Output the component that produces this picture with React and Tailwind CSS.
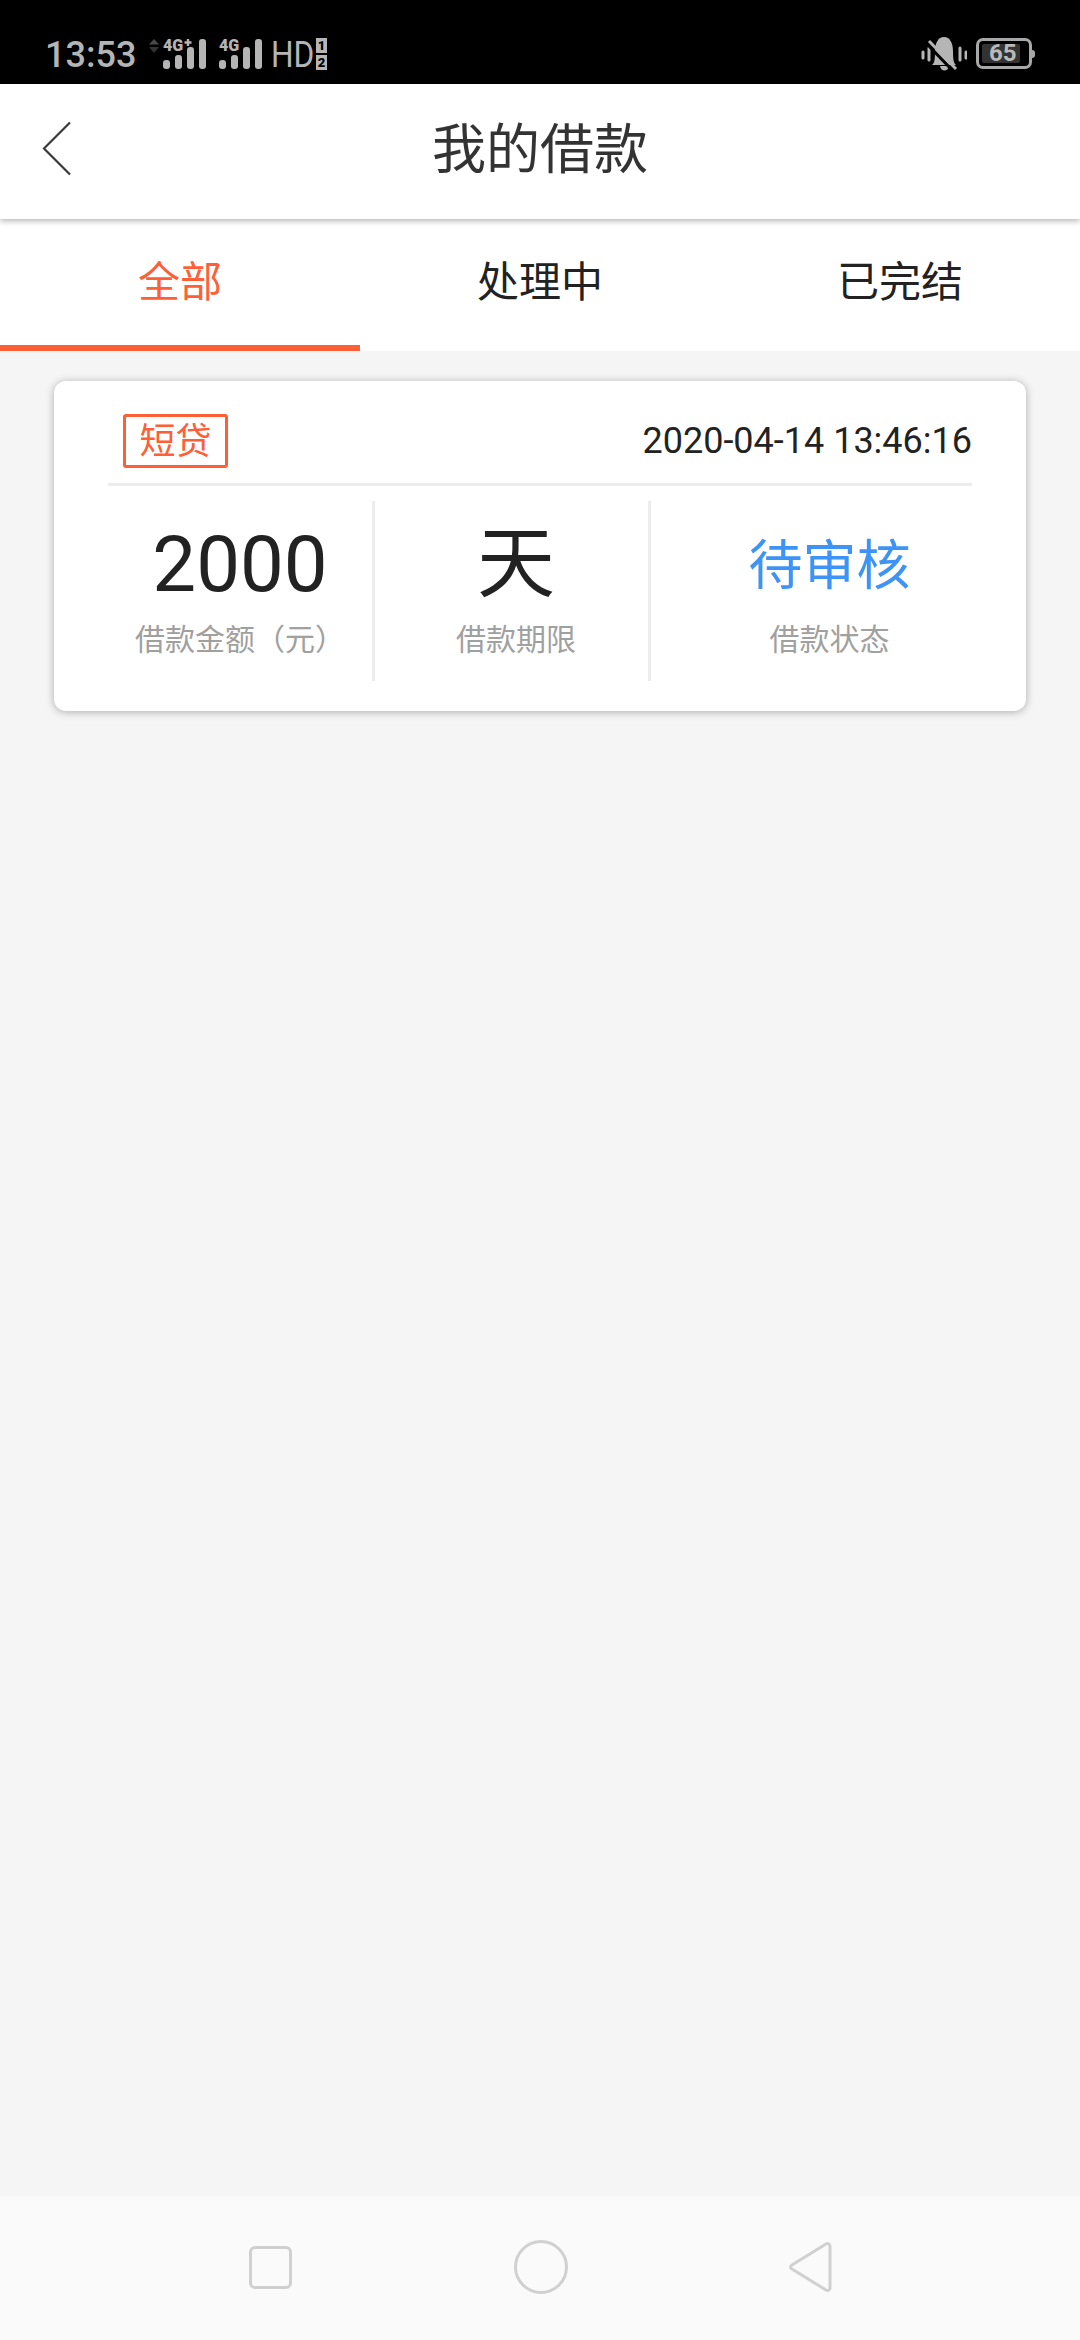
const FONT = 'font-[Roboto,"Noto_Sans_CJK_SC",sans-serif]'

function Signal({ label, plus }) {
  return (
    <svg width="44" height="36" viewBox="0 -4 44 36" className="block -mt-[4px]">
      <text x="0" y="12.500" fontFamily="Roboto, sans-serif" fontWeight="900" fontSize="16" fill="#b5b5b5">{label}</text>
      {plus && <path d="M25 1v7M21.500 4.500h7" stroke="#b5b5b5" strokeWidth="2.400" />}
      <rect x="0" y="22" width="7" height="9" rx="3" fill="#b5b5b5" />
      <rect x="12" y="17" width="7" height="14" rx="3" fill="#b5b5b5" />
      <rect x="24" y="9" width="7" height="22" rx="3" fill="#b5b5b5" />
      <rect x="36" y="1" width="7" height="30" rx="3" fill="#b5b5b5" />
    </svg>
  )
}

function SimBadge() {
  return (
    <div className="flex flex-col gap-[2px]">
      {['1', '2'].map(n => (
        <div key={n} className="w-[11px] h-[15px] bg-[#b5b5b5] text-black text-[13px] font-black leading-[15px] text-center">{n}</div>
      ))}
    </div>
  )
}

function MuteBell() {
  return (
    <svg width="46" height="34" viewBox="0 0 46 34" className="block">
      <path d="M2 15v6M8 11v12M39 11v12M45 15v6" stroke="#b5b5b5" strokeWidth="3" strokeLinecap="round" />
      <path d="M11 28c2-2 3-4 3-13C14 6 17 0 23 0s9 6 9 15c0 9 1 11 3 13z" fill="#b5b5b5" />
      <path d="M19 29h9c-1 6-8 6-9 0z" fill="#b5b5b5" />
      <path d="M6 7l26 27" stroke="#000" strokeWidth="3" />
      <path d="M8 4l27 28" stroke="#b5b5b5" strokeWidth="3" />
    </svg>
  )
}

function Battery() {
  return (
    <div className="flex items-center">
      <div className="w-[56px] h-[31px] border-[3px] border-[#a8a8a8] rounded-[7px] p-[3px] flex">
        <div className="w-[38px] h-full bg-[#333] rounded-[2px] relative">
          <span className="absolute left-[7px] top-0 text-[#b9b9b9] text-[24px] font-bold leading-[19px]">65</span>
        </div>
      </div>
      <div className="w-[3px] h-[8px] bg-[#a8a8a8] rounded-r-full" />
    </div>
  )
}

function StatusBar() {
  return (
    <div className="h-[84px] bg-black flex items-start justify-between pl-[45px] pr-[45px] pt-[38px] shrink-0">
      <div className="flex items-start">
        <span className="text-[36px] leading-[34px] font-medium text-[#b5b5b5] w-[104px]">13:53</span>
        <svg width="10" height="14" viewBox="0 0 10 14" className="mt-[1px]">
          <path d="M5 0l5 5.500H0z" fill="#4a4a4a" />
          <path d="M5 14l5-6H0z" fill="#333" />
        </svg>
        <div className="ml-[4px]"><Signal label="4G" plus /></div>
        <div className="ml-[12px]"><Signal label="4G" /></div>
        <span className="ml-[8px] text-[36px] leading-[34px] text-[#b5b5b5] scale-x-[0.88] origin-left w-[45px]">HD</span>
        <SimBadge />
      </div>
      <div className="flex items-start gap-[9px]">
        <div className="-mt-[1px]"><MuteBell /></div>
        <Battery />
      </div>
    </div>
  )
}

function NavBar() {
  return (
    <div className="h-[144px] bg-[#fafafa] flex items-center shrink-0 pl-[249px] pb-[2px]">
      <div className="w-[43px] h-[43px] border-[3px] border-[#d0d0d0] rounded-[6px]" />
      <div className="ml-[222px] w-[54px] h-[54px] border-[3px] border-[#d0d0d0] rounded-full" />
      <svg width="44" height="52" viewBox="0 0 44 52" className="ml-[220px]">
        <path d="M38 3 4 24c-2 1-2 3 0 4l34 21c2 1 4 0 4-2V5c0-2-2-3-4-2z" fill="none" stroke="#d0d0d0" strokeWidth="3" />
      </svg>
    </div>
  )
}

function Stat({ className, children, label }) {
  return (
    <div className={`flex flex-col items-center shrink-0 pt-[22px] ${className}`}>
      <div className="h-[84px] flex items-end">{children}</div>
      <p className="mt-[13px] text-[30px] leading-[40px] text-[#a0a0a0] whitespace-nowrap">{label}</p>
    </div>
  )
}

export default function App() {
  return (
    <div className={`h-[2340px] flex flex-col bg-[#f5f5f5] overflow-hidden ${FONT}`}>
      <StatusBar />

      {/* header */}
      <div className="h-[135px] bg-white flex items-center justify-center relative z-10 shadow-[0_2px_6px_rgba(0,0,0,0.3)] shrink-0">
        <svg width="30" height="56" viewBox="0 0 30 56" className="absolute left-[42px] top-[37px]">
          <path d="M28 1.500 2 27.500l26 26" fill="none" stroke="#3a3a3a" strokeWidth="2.200" />
        </svg>
        <h1 className="text-[54px] leading-[60px] text-[#333] font-normal -mt-[2px]">我的借款</h1>
      </div>

      {/* tabs */}
      <div className="h-[132px] bg-white flex shrink-0">
        <div className="flex-1 flex items-center justify-center border-b-[6px] border-[#ff5f36] text-[#ff5f36] text-[42px]">全部</div>
        <div className="flex-1 flex items-center justify-center border-b-[6px] border-transparent text-[#222] text-[42px]">处理中</div>
        <div className="flex-1 flex items-center justify-center border-b-[6px] border-transparent text-[#222] text-[42px]">已完结</div>
      </div>

      <div className="flex-1 px-[54px] pt-[30px]">
        <div className="h-[330px] bg-white rounded-[12px] shadow-[0_1px_9px_rgba(0,0,0,0.3)] px-[54px]">
          <div className="h-[105px] border-b-[3px] border-[#ececec] flex items-start justify-between">
            <span className="ml-[15px] mt-[33px] w-[105px] h-[54px] border-[3px] border-[#ff5f36] rounded-[3px] text-[#ff5f36] text-[36px] leading-[50px] text-center">短贷</span>
            <span className="mt-[38px] text-[36px] leading-[44px] text-[#222]">2020-04-14 13:46:16</span>
          </div>
          <div className="mt-[15px] flex h-[180px]">
            <Stat className="w-[267px] border-r-[3px] border-[#ececec]" label="借款金额（元）">
              <span className="text-[78px] leading-[84px] text-[#222]">2000</span>
            </Stat>
            <Stat className="w-[276px] pl-[9px] border-r-[3px] border-[#ececec]" label="借款期限">
              <span className="text-[78px] leading-[84px] text-[#222]">天</span>
            </Stat>
            <Stat className="w-[357px]" label="借款状态">
              <span className="text-[54px] leading-[80px] text-[#3d94f6]">待审核</span>
            </Stat>
          </div>
        </div>
      </div>

      <NavBar />
    </div>
  )
}
